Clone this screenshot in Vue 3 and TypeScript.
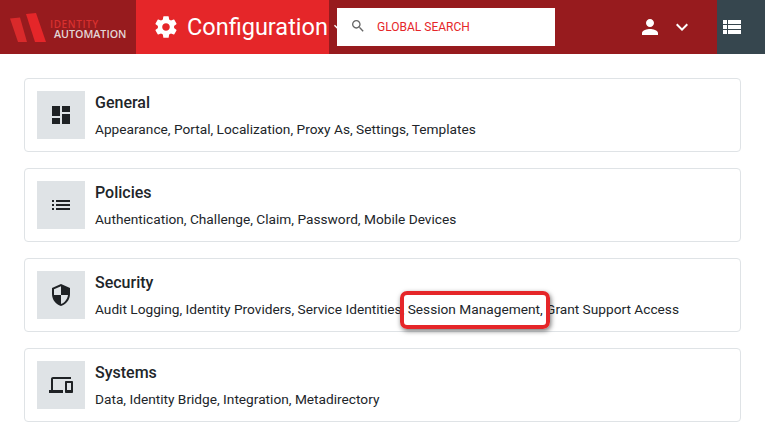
<script setup lang="ts">
interface Card { title: string; text: string; icon: string }
const cards: Card[] = [
  { title: 'General', text: 'Appearance, Portal, Localization, Proxy As, Settings, Templates', icon: 'M3 13h8V3H3v10zm0 8h8v-6H3v6zm10 0h8V11h-8v10zm0-18v6h8V3h-8z' },
  { title: 'Policies', text: 'Authentication, Challenge, Claim, Password, Mobile Devices', icon: 'M3 13h2v-2H3v2zm0 4h2v-2H3v2zm0-8h2V7H3v2zm4 4h14v-2H7v2zm0 4h14v-2H7v2zM7 7v2h14V7H7z' },
  { title: 'Security', text: 'Audit Logging, Identity Providers, Service Identities, Session Management, Grant Support Access', icon: 'M12 1L3 5v6c0 5.55 3.84 10.74 9 12 5.16-1.26 9-6.45 9-12V5l-9-4zm0 10.99h7c-.53 4.12-3.28 7.79-7 8.94V12H5V6.3l7-3.11v8.8z' },
  { title: 'Systems', text: 'Data, Identity Bridge, Integration, Metadirectory', icon: 'M4 6h18V4H4c-1.1 0-2 .9-2 2v11H0v3h14v-3H4V6zm19 2h-6c-.55 0-1 .45-1 1v10c0 .55.45 1 1 1h6c.55 0 1-.45 1-1V9c0-.55-.45-1-1-1zm-1 9h-4v-7h4v7z' },
]
</script>

<template>
  <div class="page">
    <header class="bar">
      <div class="brand">
        <svg class="mark" width="38" height="30" viewBox="0 0 38 30">
          <polygon points="0,5.500 10,4.500 17,29 8,29" fill="#d92a2b" />
          <polygon points="16,1 26,0 36,29 25,29" fill="#e52629" />
        </svg>
        <div class="brand-text">
          <span class="b1">IDENTITY</span>
          <span class="b2">AUTOMATION</span>
        </div>
      </div>
      <div class="module">
        <svg class="gear" width="26" height="26" viewBox="0 0 24 24" fill="#fff">
          <path d="M19.43 12.98c.04-.32.07-.64.07-.98s-.03-.66-.07-.98l2.11-1.65c.19-.15.24-.42.12-.64l-2-3.46c-.12-.22-.39-.3-.61-.22l-2.49 1c-.52-.4-1.08-.73-1.69-.98l-.38-2.65C14.46 2.18 14.25 2 14 2h-4c-.25 0-.46.18-.49.42l-.38 2.65c-.61.25-1.17.59-1.69.98l-2.49-1c-.23-.09-.49 0-.61.22l-2 3.46c-.13.22-.07.49.12.64l2.11 1.65c-.04.32-.07.65-.07.98s.03.66.07.98l-2.11 1.65c-.19.15-.24.42-.12.64l2 3.46c.12.22.39.3.61.22l2.49-1c.52.4 1.08.73 1.69.98l.38 2.65c.03.24.24.42.49.42h4c.25 0 .46-.18.49-.42l.38-2.65c.61-.25 1.17-.59 1.69-.98l2.49 1c.23.09.49 0 .61-.22l2-3.46c.12-.22.07-.49-.12-.64l-2.11-1.65zM12 15.5c-1.93 0-3.5-1.57-3.5-3.5s1.57-3.5 3.5-3.5 3.5 1.57 3.5 3.5-1.57 3.5-3.5 3.5z" />
        </svg>
        <span class="module-name">Configuration</span>
        <svg class="caret" width="16" height="16" viewBox="0 0 24 24" fill="#fff">
          <path d="M7.410 8.590L12 13.170l4.590-4.580L18 10l-6 6-6-6z" />
        </svg>
      </div>
      <div class="search">
        <svg class="search-icon" width="16" height="16" viewBox="0 0 24 24" fill="#666">
          <path d="M15.5 14h-.79l-.28-.27C15.41 12.59 16 11.11 16 9.5 16 5.91 13.09 3 9.5 3S3 5.91 3 9.5 5.91 16 9.5 16c1.61 0 3.09-.59 4.23-1.57l.27.28v.79l5 4.99L20.49 19l-4.99-5zm-6 0C7.01 14 5 11.99 5 9.5S7.01 5 9.5 5 14 7.01 14 9.5 11.99 14 9.5 14z" />
        </svg>
        <span class="search-text">GLOBAL SEARCH</span>
      </div>
      <div class="user">
        <svg class="glyph" width="24" height="24" viewBox="0 0 24 24" fill="#fff">
          <path d="M12 12c2.21 0 4-1.790 4-4s-1.790-4-4-4-4 1.790-4 4 1.790 4 4 4zm0 2c-2.670 0-8 1.340-8 4v2h16v-2c0-2.660-5.330-4-8-4z" />
        </svg>
        <svg class="glyph" width="24" height="24" viewBox="0 0 24 24" fill="#fff">
          <path d="M7.410 8.590L12 13.170l4.590-4.580L18 10l-6 6-6-6z" />
        </svg>
      </div>
      <div class="tile">
        <svg width="18" height="14" viewBox="0 0 18 14" fill="#fff">
          <rect x="0" y="0" width="18" height="4" />
          <rect x="0" y="5" width="18" height="4" />
          <rect x="0" y="10" width="18" height="4" />
          <rect x="4" y="0" width="1" height="14" fill="#36464e" />
        </svg>
      </div>
    </header>

    <main class="list">
      <section v-for="c in cards" :key="c.title" class="card">
        <div class="icon">
          <svg width="24" height="24" viewBox="0 0 24 24" fill="#1f2225"><path :d="c.icon" /></svg>
        </div>
        <div class="body">
          <h2 class="title">{{ c.title }}</h2>
          <p class="text">{{ c.text }}</p>
        </div>
      </section>
    </main>
    <div class="callout"></div>
  </div>
</template>

<style>
html, body { margin: 0; background: #fff; overflow: hidden; }
</style>

<style scoped>
.page { position: relative; width: 765px; height: 443px; font-family: Roboto, "Liberation Sans", sans-serif; overflow: hidden; }
.bar { display: flex; align-items: stretch; height: 54px; background: #971b1e; }
.brand { width: 136px; display: flex; align-items: center; padding-left: 10px; box-sizing: border-box; gap: 3px; flex: none; }
.mark { flex: none; margin-top: 1px; }
.brand-text { display: flex; flex-direction: column; font-family: "Open Sans", sans-serif; font-size: 10.700px; line-height: 10px; margin-top: 3px; font-weight: 600; white-space: nowrap; }
.b1 { color: #d8302f; font-size: 10px; letter-spacing: 0.6px; margin-left: -1px; }
.b2 { color: #e3d6d6; margin-left: 3px; }
.module { width: 193px; background: #e52629; color: #fff; display: flex; align-items: center; padding-left: 17px; box-sizing: border-box; flex: none; position: relative; }
.gear { flex: none; }
.module-name { font-size: 23.500px; white-space: nowrap; margin-left: 8px; flex: none; }
.caret { flex: none; position: absolute; left: 194px; top: 19px; }
.search { width: 218px; height: 38px; margin: 8px 0 0 8px; background: #fff; display: flex; align-items: center; flex: none; position: relative; z-index: 1; }
.search-icon { margin-left: 13px; margin-top: -3px; flex: none; }
.search-text { color: #e52629; font-size: 12px; margin-left: 11px; }
.user { flex: 1; display: flex; align-items: center; padding-left: 83px; gap: 8px; }
.glyph { flex: none; }
.tile { width: 48px; background: #36464e; display: flex; align-items: center; padding-left: 6px; box-sizing: border-box; flex: none; }
.list { display: flex; flex-direction: column; gap: 16px; padding: 24px 24px 0; width: 717px; }
.card { height: 74px; box-sizing: border-box; border: 1px solid #dfe3e6; border-radius: 4px; display: flex; align-items: center; padding-left: 12px; gap: 10px; background: #fff; }
.icon { width: 48px; height: 48px; background: #dfe3e6; display: flex; align-items: center; justify-content: center; flex: none; }
.title { margin: 0 0 7px; font-size: 16px; line-height: 20px; font-weight: 500; color: #212529; }
.text { margin: 0; font-size: 13.700px; line-height: 18px; color: #212529; white-space: nowrap; }
.callout { position: absolute; left: 400px; top: 291px; width: 150px; height: 38px; box-sizing: border-box; border: 4px solid #e52629; border-radius: 7px; box-shadow: 1px 2px 5px rgba(0,0,0,.55); }
</style>
